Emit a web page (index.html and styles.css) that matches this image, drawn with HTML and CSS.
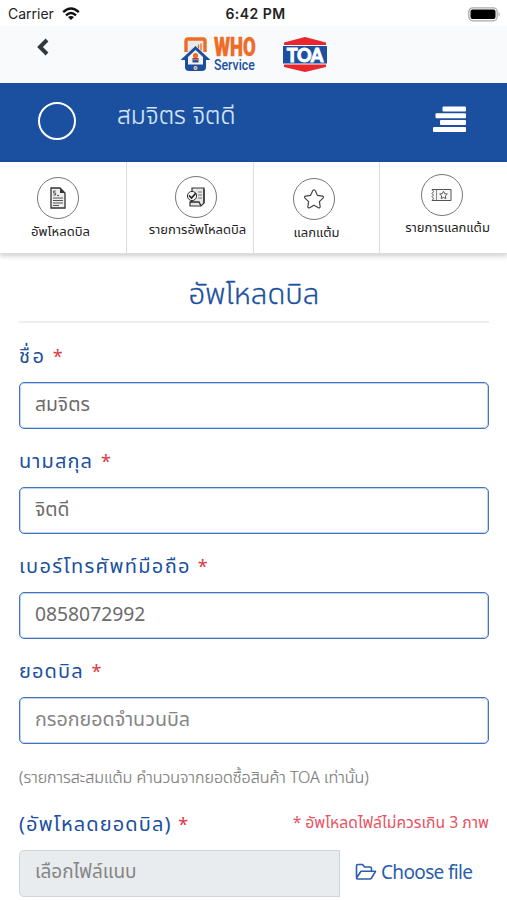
FILE: index.html
```html
<!DOCTYPE html>
<html lang="th">
<head>
<meta charset="utf-8">
<title>WHO Service</title>
<link rel="stylesheet" href="styles.css">
</head>
<body>
<div class="status">
  <div class="carrier"><span>Carrier</span>
    <svg width="18" height="14" viewBox="0 0 18 14"><g fill="none" stroke="#111" stroke-width="2.4"><path d="M1.2 5.2Q9-2 16.8 5.2"/><path d="M4 8.3Q9 3.8 14 8.3"/></g><path d="M9 13 6 10.1Q9 7.8 12 10.1z" fill="#111"/></svg>
  </div>
  <div class="clock">6:42 PM</div>
  <svg class="battery" width="33" height="15" viewBox="0 0 33 15"><rect x=".8" y=".8" width="28.4" height="13" rx="4" fill="#fff" stroke="#aaa" stroke-width="1.3"/><rect x="2.5" y="2.5" width="25" height="9.6" rx="2" fill="#000"/><path d="M30.7 5q2 2.3 0 4.5z" fill="#999"/></svg>
</div>
<header class="top">
  <svg class="back" width="14" height="18" viewBox="0 0 14 18"><path d="M11 2 4 9l7 7" fill="none" stroke="#30373d" stroke-width="4"/></svg>
  <div class="who">
    <svg width="31" height="34" viewBox="0 0 31 34"><path d="M6 15V4q0-2 2-2h15q2 0 2 2v11" fill="#e9e9e9" stroke="#ee6c25" stroke-width="3.400"/><path d="M18.500 7.500v4M21 6.500v7" stroke="#ee6c25" stroke-width="1.300"/><path d="M5 20h21v10q0 4-4 4H9q-4 0-4-4z" fill="#1b50a0"/><path d="M15.500 9 .5 23H5v5h21v-5h4.500z" fill="#1b50a0"/><path d="m15.500 13-7.500 7v7.500h15V20z" fill="#f3f3f3"/><circle cx="15.500" cy="18.500" r="2.600" fill="#ee6c25"/><path d="M12.500 21h6v4.500h-6z" fill="#1b50a0"/><path d="M12.500 22.500h6" stroke="#ee6c25" stroke-width="1.500"/><circle cx="15.500" cy="31" r="2" fill="#f6d5c3"/><circle cx="15.500" cy="31" r="1.100" fill="#ee6c25"/></svg>
    <div class="who-text"><b><span>WHO</span></b><i><span>Service</span></i></div>
  </div>
  <div class="toa"><svg width="44" height="35" viewBox="0 0 44 35"><path d="M1 5.500 22 0l21 5.500V8H1z" fill="#e8262c"/><path d="M0 9h44v17.500H0z" fill="#1b50a0"/><path d="M1 27.500h42V30l-21 5-21-5z" fill="#e8262c"/></svg><span>TOA</span></div>
</header>
<section class="user">
  <div class="avatar"></div>
  <div class="name"><span>สมจิตร จิตดี</span></div>
  <svg class="menu" width="33" height="27" viewBox="0 0 33 27"><g fill="#fff"><rect x="9.500" y=".5" width="23.500" height="5" rx="1"/><rect x="2.500" y="7.300" width="30.500" height="5" rx="1"/><rect x="7" y="14" width="26" height="5" rx="1"/><rect x="0" y="21" width="33" height="5" rx="1"/></g></svg>
</section>
<nav class="tabs">
  <a class="tab t1"><div class="disc"><svg width="18" height="22" viewBox="0 0 18 22"><path d="M2 1h9l5 5v15H2z" fill="#eee" stroke="#333" stroke-width="1.300"/><path d="M11 1v5h5z" fill="#333"/><path d="M4 11h10M4 13.500h10M4 16h10M4 18.500h6M8 8.500h2M6.800 4H4.600v2h2v2H4.400" fill="none" stroke="#444" stroke-width=".9"/></svg></div><span>อัพโหลดบิล</span></a>
  <a class="tab t2"><div class="disc"><svg width="20" height="22" viewBox="0 0 20 22"><path d="M6 2h12v15l-3 3H4v-4h2z" fill="#e6e6e6" stroke="#333" stroke-width="1.200"/><path d="M4 16h9l2 4M18 3v14" fill="none" stroke="#333" stroke-width="1.300"/><path d="M12 6h4M12 9h4M12 12h4" stroke="#777"/><circle cx="6" cy="10" r="4.600" fill="#f3f3f3" stroke="#333"/><path d="m3 9.500 2.500 2.500 4.500-5" fill="none" stroke="#222" stroke-width="1.700"/></svg></div><span>รายการอัพโหลดบิล</span></a>
  <a class="tab t3"><div class="disc"><svg width="22" height="22" viewBox="0 0 22 22"><path d="M9.800 2.500q1.200-1.500 2.400 0l2.200 4.800 5 .8q1.800.6.600 2l-3.600 3.500.8 5.200q-.2 1.600-1.800 1L11 17.200l-4.400 2.600q-1.600.6-1.800-1l.8-5.200L2 10.100q-1.200-1.400.6-2l5-.8z" fill="none" stroke="#444" stroke-width="1.200" stroke-linejoin="round"/></svg></div><span>แลกแต้ม</span></a>
  <a class="tab t4"><div class="disc"><svg width="21" height="14" viewBox="0 0 21 14"><path d="M1 1.500h19v11H1l1.500-2L1 8.500 2.500 7 1 5.500l1.500-2z" fill="#f5f5f5" stroke="#555" stroke-width="1"/><path d="M5.500 2v10" stroke="#888"/><path d="m12.500 3.300 1.200 2.300 2.600.4-1.900 1.900.4 2.700-2.300-1.200-2.300 1.200.4-2.700L8.700 6l2.600-.4z" fill="none" stroke="#555"/></svg></div><span>รายการแลกแต้ม</span></a>
</nav>
<main class="form">
  <h1><span>อัพโหลดบิล</span></h1>
  <label class="l1"><span>ชื่อ</span> <em>*</em></label>
  <div class="input"><span class="v1">สมจิตร</span></div>
  <label class="l2"><span>นามสกุล</span> <em>*</em></label>
  <div class="input"><span class="v2">จิตดี</span></div>
  <label class="l3"><span>เบอร์โทรศัพท์มือถือ</span> <em>*</em></label>
  <div class="input"><span class="v3">0858072992</span></div>
  <label class="l4"><span>ยอดบิล</span> <em>*</em></label>
  <div class="input"><span class="v4">กรอกยอดจำนวนบิล</span></div>
  <p class="hint"><span>(รายการสะสมแต้ม คำนวนจากยอดซื้อสินค้า TOA เท่านั้น)</span></p>
  <div class="row"><label class="l5"><span>(อัพโหลดยอดบิล)</span> <em>*</em></label><p class="limit"><span>* อัพโหลดไฟล์ไม่ควรเกิน 3 ภาพ</span></p></div>
  <div class="file"><div class="path"><span class="v5">เลือกไฟล์แนบ</span></div>
    <div class="choose"><svg width="22" height="18" viewBox="0 0 22 18"><path d="M1.500 14.500V3q0-1.500 1.500-1.500h4.500l2 2.500H15q1.500 0 1.500 1.500V8M1.500 15 6 8.300h14.500L16.500 15q-.6 1-1.800 1H2.500q-1 0-1-1z" fill="none" stroke="#2b5eab" stroke-width="1.600" stroke-linejoin="round"/></svg><span>Choose file</span></div></div>
</main>
</body>
</html>
```
FILE: styles.css
```css
* { box-sizing: border-box; }
body { margin: 0; width: 507px; height: 900px; overflow: hidden; background: #fff; font-family: "Noto Sans Thai", "Prompt", "Noto Sans", sans-serif; }
svg { display: block; flex: none; }
span { display: inline-block; white-space: nowrap; }
.status { height: 26px; display: grid; grid-template-columns: 1fr auto 1fr; align-items: center; padding: 2px 6px 0 8px; font: 15px/24px Inter, sans-serif; color: #222; }
.carrier { display: flex; align-items: center; gap: 8px; font-size: 14px; }
.clock { font-weight: 600; font-size: 14px; letter-spacing: .45px; margin-left: 2px; }
.battery { justify-self: end; }
.top { height: 57px; background: #f8fafc; display: flex; align-items: flex-start; padding: 11px 0 0 36px; }
.back { margin-top: 1px; }
.who { display: flex; margin-left: 130px; gap: 3px; }
.who-text { width: 44px; }
.who-text b, .who-text i { display: block; }
.who-text b { height: 20px; font: 900 26px/20px Roboto, sans-serif; color: #ee6c25; }
.who-text i { height: 15px; margin-top: 1px; font: 500 14px/15px Roboto, sans-serif; color: #1b50a0; }
.who-text span { transform-origin: left; }
.who-text b span { transform: scaleX(.71); -webkit-text-stroke: .5px #ee6c25; }
.who-text i span { transform: scaleX(.88); }
.toa { position: relative; width: 44px; margin-left: 25px; }
.toa span { position: absolute; inset: 8px 0 auto; text-align: center; color: #fff; font: 900 18px/20px Lato, sans-serif; letter-spacing: -.3px; -webkit-text-stroke: .8px #fff; }
.user { height: 79px; background: #1b50a0; display: flex; align-items: flex-start; padding: 19px 41px 0 38px; }
.avatar { width: 38px; height: 38px; border: 2px solid #fff; border-radius: 50%; }
.name { flex: 1; margin-left: 41px; font-size: 24.500px; line-height: 29px; color: #dbe8fb; font-weight: 300; -webkit-text-stroke: .2px #dbe8fb; }
.menu { margin-top: 4px; }
.tabs { height: 92px; display: grid; grid-template-columns: 127px 127px 126px 127px; border-bottom: 1px solid #ddd; box-shadow: 0 2px 5px #0003; }
.tab { display: flex; flex-direction: column; align-items: center; border-right: 1px solid #ddd; color: #222; font-size: 13px; line-height: 20px; padding-top: 15px; }
.tab:last-child { border-right: 0; }
.disc { width: 42px; height: 42px; border: 1px solid #777; border-radius: 50%; display: flex; align-items: center; justify-content: center; }
.t1 .disc { margin-right: 11px; }
.t1 span { margin: 3px 5px 0 0; }
.t2 { padding-top: 14px; }
.t2 .disc { margin-left: 11px; }
.t2 span { margin: 2px 0 0 15px; }
.t3 { padding-top: 16px; }
.t3 .disc { margin-right: 5px; }
.t3 span { margin-top: 3px; }
.t4 { padding-top: 12px; }
.t4 .disc { margin-right: 4px; }
.t4 span { margin: 2px 0 0 8px; }
.form { padding: 0 18px 0 19px; color: #1b50a0; }
h1 { margin: 0 0 13px; height: 69px; border-bottom: 2px solid #eee; font-size: 29.300px; line-height: 82px; font-weight: 300; text-align: center; -webkit-text-stroke: .3px #1b50a0; }
label { display: block; height: 46px; line-height: 42px; font-size: 20px; letter-spacing: 1.100px; white-space: nowrap; }
.l1 span { letter-spacing: 2.500px; }
.l1 em { margin-left: 0; }
.l3 span { letter-spacing: 1.350px; }
.l3 em, .l5 em { margin-left: .5px; }
em { font-style: normal; font-size: 18px; color: #dc3545; margin-left: 1.500px; }
.input { height: 47px; margin-bottom: 12px; padding: 0 15px; border: 1px solid #4174bb; box-shadow: inset 0 0 0 1px #bfd3ee; border-radius: 5px; line-height: 45px; font-size: 19.300px; color: #6b6b6b; }
.v4 { font-size: 19.700px; line-height: 42px; }
.v4, .v5 { color: #858585; }
.hint { margin: 0; height: 46px; line-height: 44px; font-size: 16.020px; color: #7c7c7c; font-weight: 300; -webkit-text-stroke: .2px #7c7c7c; }
.row { display: flex; justify-content: space-between; height: 48px; }
.l5 { line-height: 47px; }
.limit { margin: 0; font-size: 15.700px; line-height: 42px; color: #e65362; }
.file { display: flex; height: 47px; }
.path { width: 321px; padding: 0 15px; background: #e9ecef; border: 1px solid #ced4da; border-radius: 5px 0 0 5px; line-height: 43px; font-size: 19px; }
.choose { display: flex; align-items: center; gap: 4px; padding-left: 15px; font-size: 19px; letter-spacing: -.65px; color: #2b5eab; }
.choose svg { margin-top: -3px; }
```
